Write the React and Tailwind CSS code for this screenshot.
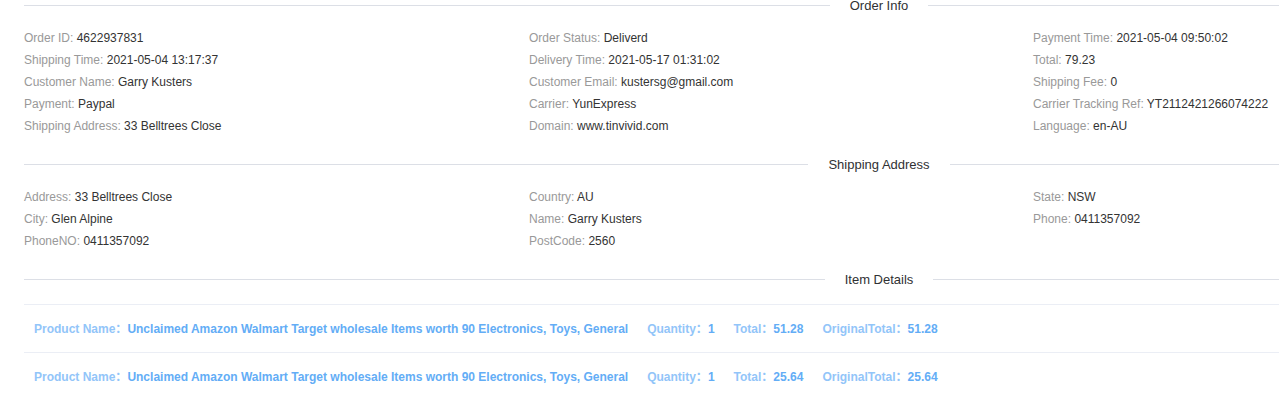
import React from "react";

const orderInfo = [
  [
    ["Order ID", "4622937831"],
    ["Shipping Time", "2021-05-04 13:17:37"],
    ["Customer Name", "Garry Kusters"],
    ["Payment", "Paypal"],
    ["Shipping Address", "33 Belltrees Close"],
  ],
  [
    ["Order Status", "Deliverd"],
    ["Delivery Time", "2021-05-17 01:31:02"],
    ["Customer Email", "kustersg@gmail.com"],
    ["Carrier", "YunExpress"],
    ["Domain", "www.tinvivid.com"],
  ],
  [
    ["Payment Time", "2021-05-04 09:50:02"],
    ["Total", "79.23"],
    ["Shipping Fee", "0"],
    ["Carrier Tracking Ref", "YT2112421266074222"],
    ["Language", "en-AU"],
  ],
];

const shipping = [
  [
    ["Address", "33 Belltrees Close"],
    ["City", "Glen Alpine"],
    ["PhoneNO", "0411357092"],
  ],
  [
    ["Country", "AU"],
    ["Name", "Garry Kusters"],
    ["PostCode", "2560"],
  ],
  [
    ["State", "NSW"],
    ["Phone", "0411357092"],
  ],
];

const items = [
  { total: "51.28", orig: "51.28" },
  { total: "25.64", orig: "25.64" },
];

function Divider({ title, className }) {
  return (
    <div className={"flex items-center h-px " + className}>
      <div className="flex-1 h-px bg-[#dcdfe6]" />
      <div className="px-5 text-[13px] leading-5 text-[#303133] whitespace-nowrap">{title}</div>
      <div className="flex-1 h-px bg-[#dcdfe6]" />
    </div>
  );
}

function InfoGrid({ cols, className }) {
  return (
    <div className={"grid grid-cols-[505px_504px_1fr] " + className}>
      {cols.map((col, i) => (
        <div key={i} className="flex flex-col">
          {col.map(([k, v]) => (
            <div key={k} className="text-xs leading-[22px] whitespace-nowrap">
              <span className="text-[#999999]">{k}: </span>
              <span className="text-[#333333]">{v}</span>
            </div>
          ))}
        </div>
      ))}
    </div>
  );
}

function Field({ label, value }) {
  return (
    <span className="mr-[19px] whitespace-nowrap">
      <span className="text-[#92c5f9]">{label}：</span>
      <span className="text-[#63adf6]">{value}</span>
    </span>
  );
}

export default function App() {
  return (
    <div
      className="w-full h-[398px] overflow-hidden bg-white"
      style={{ fontFamily: '"Liberation Sans", Arial, "Noto Sans CJK SC", sans-serif' }}
    >
      <div className="w-[1734px] pl-6">
        <Divider title="Order Info" className="mt-[5px]" />
        <InfoGrid cols={orderInfo} className="mt-[21px]" />
        <Divider title="Shipping Address" className="mt-[27px]" />
        <InfoGrid cols={shipping} className="mt-[21px]" />
        <Divider title="Item Details" className="mt-[27px]" />
        <div className="mt-6">
          {items.map((it, i) => (
            <div
              key={i}
              className="h-12 border-t border-[#ebeef5] flex items-center pl-[10px] text-xs font-bold"
            >
              <Field
                label="Product Name"
                value="Unclaimed Amazon Walmart Target wholesale Items worth 90 Electronics, Toys, General"
              />
              <Field label="Quantity" value="1" />
              <Field label="Total" value={it.total} />
              <Field label="OriginalTotal" value={it.orig} />
            </div>
          ))}
        </div>
      </div>
    </div>
  );
}
